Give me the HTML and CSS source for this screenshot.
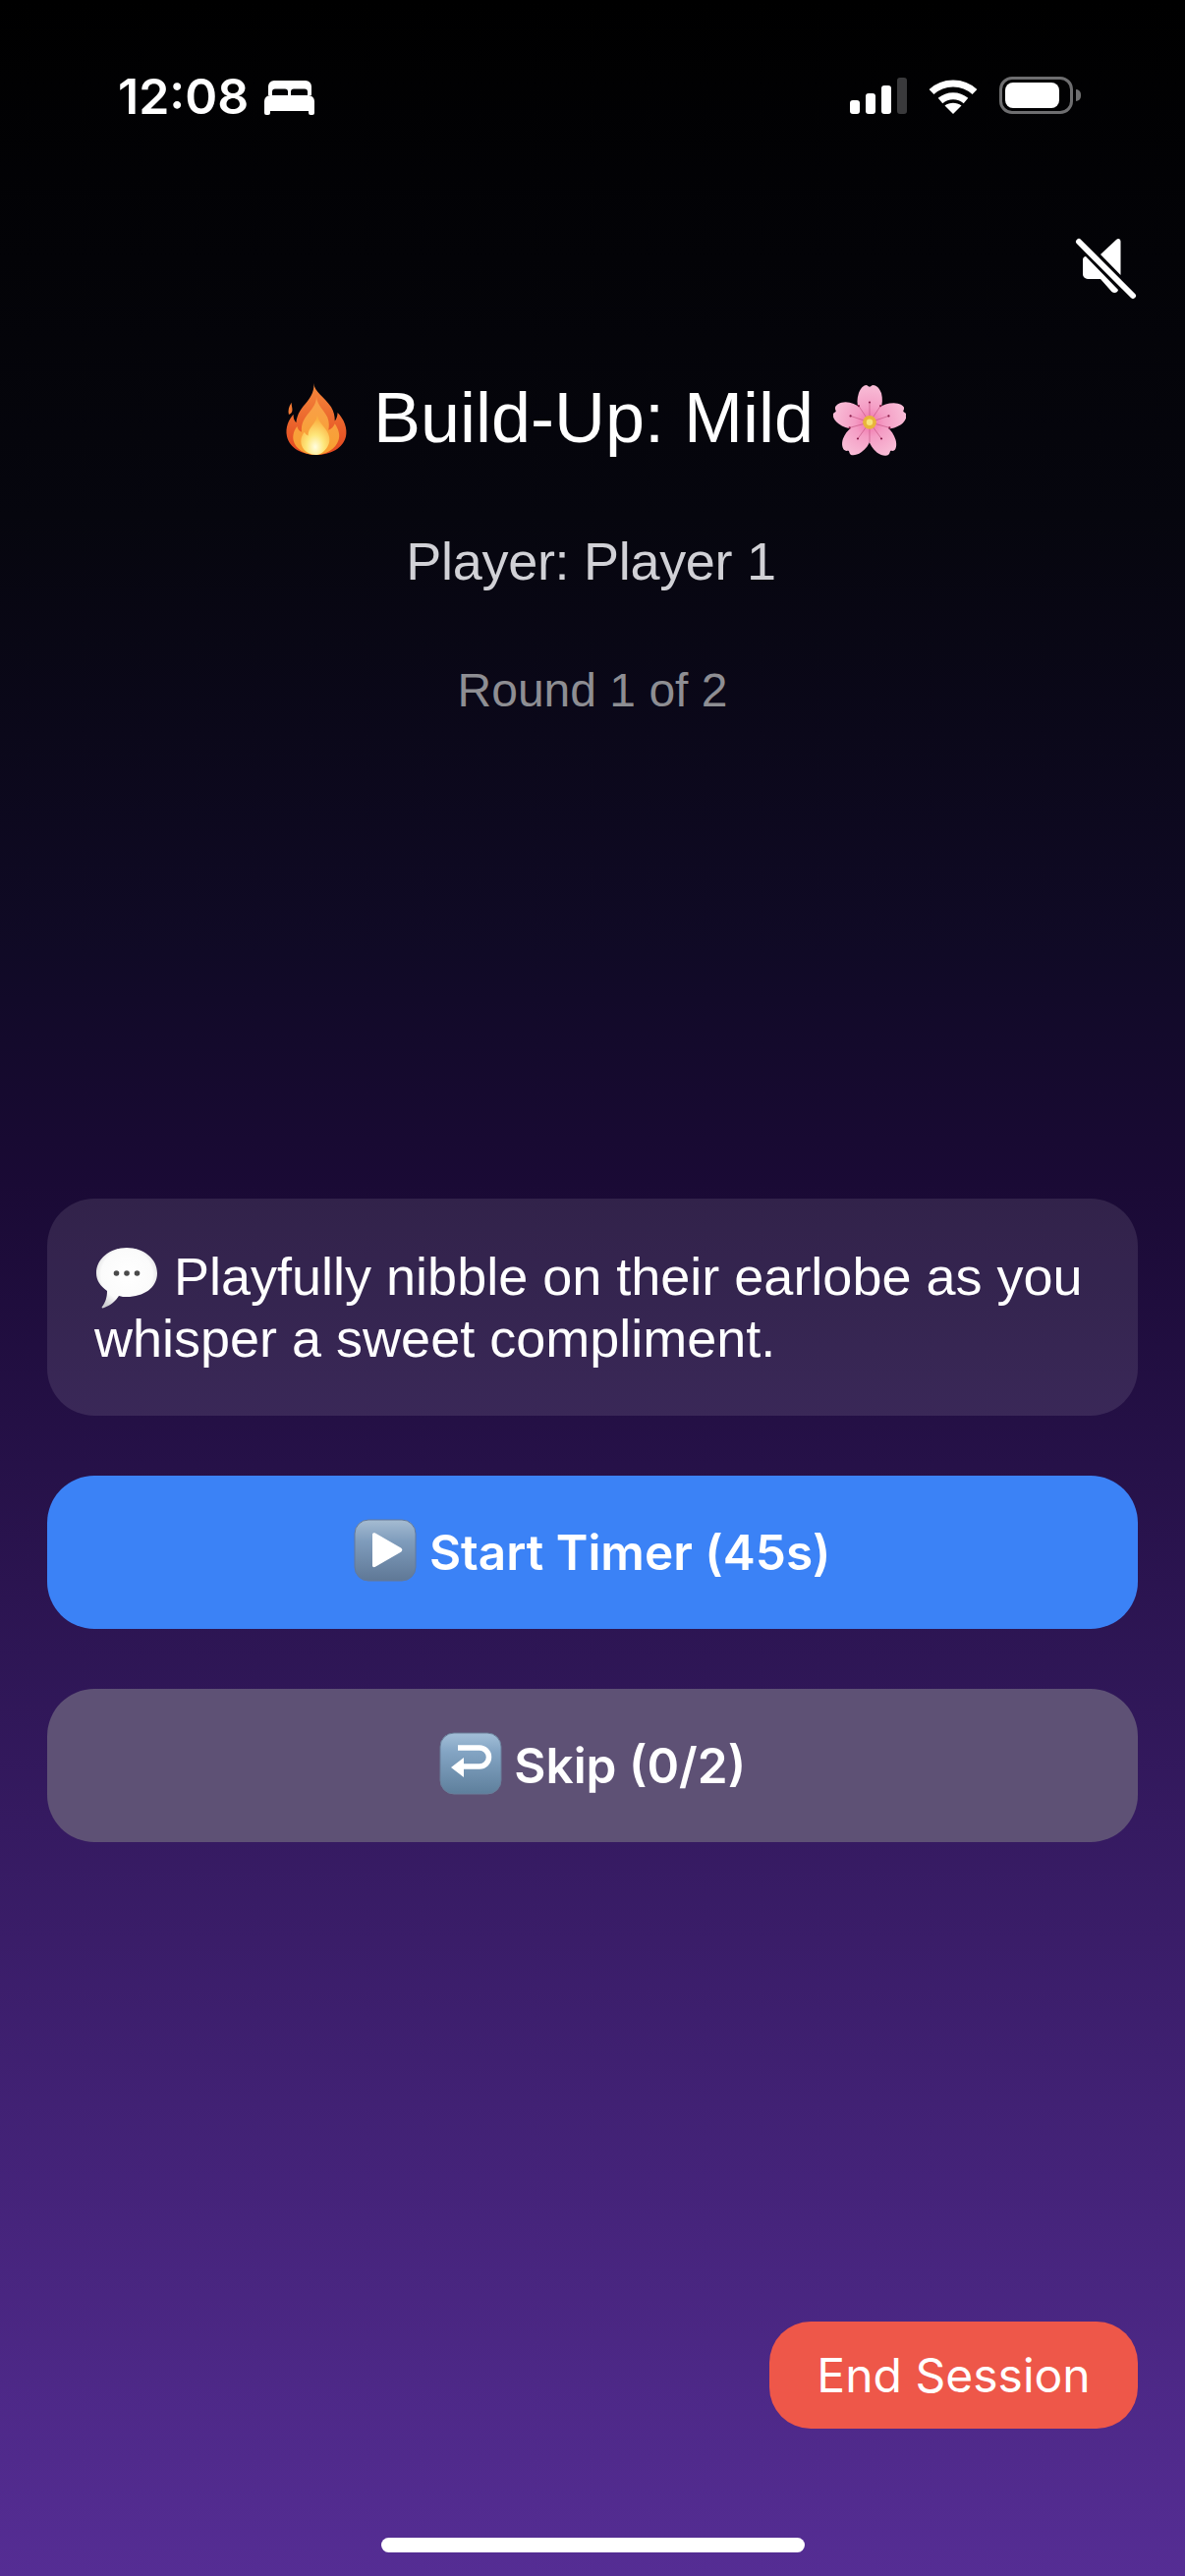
FILE: index.html
```html
<!DOCTYPE html>
<html lang="en">
<head>
  <meta charset="UTF-8">
  <meta name="viewport" content="width=device-width, initial-scale=1.0">
  <title>Build-Up: Mild</title>
  <link rel="stylesheet" href="styles.css">
</head>
<body>
  <div class="screen">
    <div class="status-bar">
      <div class="status-left">
        <span class="clock">12:08</span>
        <svg class="bed" viewBox="0 0 51 35">
          <path fill="#fff" fill-rule="evenodd" d="M10 0h32a6 6 0 0 1 6 6v9H44v-3.500a3 3 0 0 0-3-3H30a3 3 0 0 0-3 3V15H24v-3.500a3 3 0 0 0-3-3H11a3 3 0 0 0-3 3V15H4V6a6 6 0 0 1 6-6z"/>
          <path fill="#fff" d="M6 15h39a6 6 0 0 1 6 6v12a2 2 0 0 1-2 2h-2a2 2 0 0 1-2-2v-2H6v2a2 2 0 0 1-2 2H2a2 2 0 0 1-2-2V21a6 6 0 0 1 6-6z"/>
        </svg>
      </div>
      <div class="status-right">
        <div class="signal">
          <i class="bar bar-1"></i>
          <i class="bar bar-2"></i>
          <i class="bar bar-3"></i>
          <i class="bar bar-4"></i>
        </div>
        <svg class="wifi" viewBox="0 0 50 37">
          <path fill="none" stroke="#fff" stroke-width="7" d="M3 14.500C15 3 35 3 47 14.500"/>
          <path fill="none" stroke="#fff" stroke-width="7" d="M12 23.500c7.500-6.500 18.500-6.500 26 0"/>
          <path fill="#fff" d="M25 37l-8.500-8.500c5-3.700 12-3.700 17 0z"/>
        </svg>
        <div class="battery">
          <div class="battery-body"><div class="battery-level"></div></div>
          <div class="battery-tip"></div>
        </div>
      </div>
    </div>

    <div class="mute-row">
      <svg class="mute" viewBox="0 0 110 100">
        <path fill="#fff" d="M60 39l16-15c2-1.800 4.500-.8 4.500 2V60z"/>
        <path fill="#fff" d="M45 41l33 34c-.5 3-4 4-6.500 2L60 64H47a5 5 0 0 1-5-5V44c0-1.500 1.500-3 3-3z"/>
        <path fill="none" stroke="#fff" stroke-width="6" stroke-linecap="round" d="M38 26l55 55"/>
      </svg>
    </div>

    <div class="header">
      <h1 class="title">
        <svg class="emoji emoji-flame" viewBox="0 0 72 80">
          <defs>
            <linearGradient id="flameOuter" x1="0" y1="0" x2="0" y2="1">
              <stop offset="0" stop-color="#f58a3c"/>
              <stop offset="1" stop-color="#e2451f"/>
            </linearGradient>
            <linearGradient id="flameMid" x1="0" y1="0" x2="0" y2="1">
              <stop offset="0" stop-color="#f9a04a"/>
              <stop offset="1" stop-color="#f8a030"/>
            </linearGradient>
            <radialGradient id="flameCore" cx="0.5" cy="0.8" r="0.7">
              <stop offset="0" stop-color="#fffde0"/>
              <stop offset="0.45" stop-color="#fde67a"/>
              <stop offset="1" stop-color="#fbb040"/>
            </radialGradient>
          </defs>
          <path fill="url(#flameOuter)" d="M33 1c1 10 12 15 19 26 3 5 4 10 4 15 2-2 3-6 3-9 7 7 11 17 9 26-3 13-17 20-32 20S7 72 4 59c-2-10 2-18 7-24 0 4 1 7 3 9 1-10 6-16 12-23 5-6 8-13 7-20z"/>
          <path fill="#f27a34" d="M6 35c-1-4 0-9 3-13 0 5 2 8 0 11-1 1-2 2-3 2z"/>
          <path fill="url(#flameMid)" d="M36 16c1 9 8 14 12 22 2 5 2 10 1 14 3-1 6-4 7-7 4 6 6 12 4 18-3 10-14 16-25 16S13 73 11 63c-1-6 1-11 4-15 1 3 2 5 5 6-1-9 3-15 8-21 4-5 8-10 8-17z"/>
          <path fill="url(#flameCore)" d="M37 36c1 7 7 11 11 18 3 6 3 11 0 16-3 5-8 9-13 9s-11-3-14-8c-3-6-2-12 2-17 1 2 2 3 4 4 0-6 3-9 6-13 2-3 4-6 4-9z"/>
        </svg>
        Build-Up: Mild
        <svg class="emoji emoji-flower" viewBox="0 0 80 80">
          <defs>
            <radialGradient id="petal" gradientUnits="userSpaceOnUse" cx="40" cy="42" r="40">
              <stop offset="0" stop-color="#f06fa8"/>
              <stop offset="0.4" stop-color="#f49cc4"/>
              <stop offset="1" stop-color="#f8bcd6"/>
            </radialGradient>
          </defs>
          <g fill="url(#petal)">
            <path d="M40 40C28 34 24 22 28 10c2-6 6-9 8-9 2 0 3 2 4 2s2-2 4-2c3 0 7 3 9 9 3 12-1 24-13 30z"/>
            <path d="M40 40C28 34 24 22 28 10c2-6 6-9 8-9 2 0 3 2 4 2s2-2 4-2c3 0 7 3 9 9 3 12-1 24-13 30z" transform="rotate(72 40 42)"/>
            <path d="M40 40C28 34 24 22 28 10c2-6 6-9 8-9 2 0 3 2 4 2s2-2 4-2c3 0 7 3 9 9 3 12-1 24-13 30z" transform="rotate(144 40 42)"/>
            <path d="M40 40C28 34 24 22 28 10c2-6 6-9 8-9 2 0 3 2 4 2s2-2 4-2c3 0 7 3 9 9 3 12-1 24-13 30z" transform="rotate(216 40 42)"/>
            <path d="M40 40C28 34 24 22 28 10c2-6 6-9 8-9 2 0 3 2 4 2s2-2 4-2c3 0 7 3 9 9 3 12-1 24-13 30z" transform="rotate(288 40 42)"/>
          </g>
          <g stroke="#c2527f" stroke-width="0.7">
            <path d="M40 42V20M40 42L19 35M40 42L61 35M40 42L27 60M40 42L53 60"/>
            <path d="M40 42L28 24M40 42L52 24M40 42L18 48M40 42L62 48M40 42L40 64"/>
          </g>
          <g fill="#8a1c4a">
            <circle cx="40" cy="20" r="1.200"/><circle cx="19" cy="35" r="1.200"/><circle cx="61" cy="35" r="1.200"/>
            <circle cx="27" cy="60" r="1.200"/><circle cx="53" cy="60" r="1.200"/><circle cx="28" cy="24" r="1.200"/>
            <circle cx="52" cy="24" r="1.200"/><circle cx="18" cy="48" r="1.200"/><circle cx="62" cy="48" r="1.200"/>
          </g>
          <circle cx="40" cy="42" r="7.500" fill="#e8b53a"/>
          <circle cx="40" cy="42" r="3.500" fill="#f8e27a"/>
        </svg>
      </h1>
      <div class="player">Player: Player 1</div>
      <div class="round">Round 1 of 2</div>
    </div>

    <div class="actions">
      <div class="prompt-card">
        <svg class="emoji emoji-speech" viewBox="0 0 66 66">
          <defs>
            <radialGradient id="bubble" cx="0.5" cy="0.45" r="0.6">
              <stop offset="0" stop-color="#ffffff"/>
              <stop offset="0.7" stop-color="#fbfbfb"/>
              <stop offset="1" stop-color="#cfcfd2"/>
            </radialGradient>
          </defs>
          <path fill="url(#bubble)" d="M33 2c17 0 31 11 31 26S50 52 33 52c-3 0-5 0-8-1-3 5-9 10-15 12-2 1-3 0-2-1 3-4 5-9 5-16C6 41 2 35 2 28 2 13 16 2 33 2z"/>
          <circle cx="22.500" cy="28" r="2.800" fill="#4a4a4a"/>
          <circle cx="33" cy="28" r="2.800" fill="#4a4a4a"/>
          <circle cx="43.500" cy="28" r="2.800" fill="#4a4a4a"/>
        </svg>
        Playfully nibble on their earlobe as you whisper a sweet compliment.
      </div>

      <button class="action-btn btn-start">
        <svg class="emoji emoji-key" viewBox="0 0 64 64">
          <defs>
            <linearGradient id="keyPlay" x1="0" y1="0" x2="0" y2="1">
              <stop offset="0" stop-color="#a5bcd2"/>
              <stop offset="0.35" stop-color="#7f9cbc"/>
              <stop offset="1" stop-color="#5f7896"/>
            </linearGradient>
          </defs>
          <rect x="1" y="1" width="62" height="62" rx="14" fill="url(#keyPlay)" stroke="#64799a" stroke-width="1"/>
          <path fill="#fff" d="M19 16c0-1.500 1.500-2.200 3-1.400l26 15c1.800 1 1.800 3.200 0 4.200l-26 15c-1.500.8-3 .1-3-1.400z"/>
        </svg>
        Start Timer (45s)
      </button>

      <button class="action-btn btn-skip">
        <svg class="emoji emoji-key" viewBox="0 0 64 64">
          <defs>
            <linearGradient id="keySkip" x1="0" y1="0" x2="0" y2="1">
              <stop offset="0" stop-color="#a3bfd8"/>
              <stop offset="0.3" stop-color="#84a5c4"/>
              <stop offset="1" stop-color="#5e7f9c"/>
            </linearGradient>
          </defs>
          <rect x="1" y="1" width="62" height="62" rx="14" fill="url(#keySkip)" stroke="#6a7f9a" stroke-width="1"/>
          <path fill="none" stroke="#fff" stroke-width="5.500" d="M19 16h22a9.500 9.500 0 0 1 9.500 9.500v0A9.500 9.500 0 0 1 41 35H20"/>
          <path fill="#fff" d="M12 36l13-10v20z"/>
        </svg>
        Skip (0/2)
      </button>
    </div>

    <div class="footer">
      <button class="end-btn">End Session</button>
    </div>

    <div class="home-bar"></div>
  </div>
</body>
</html>
```

FILE: styles.css
```css
* {
  box-sizing: border-box;
}
body {
  margin: 0;
  background: #000;
  font-family: "Liberation Sans", Arial, sans-serif;
  color: #fff;
}
.screen {
  width: 1206px;
  height: 2622px;
  display: flex;
  flex-direction: column;
  overflow: hidden;
  background: linear-gradient(to bottom, #000 0%, #06060e 20%, #100a26 37%, #1a0a35 46%, #552d94 100%);
}

/* status bar */
.status-bar {
  height: 220px;
  padding: 72px 106px 0 120px;
  display: flex;
  justify-content: space-between;
  align-items: flex-start;
}
.status-left {
  display: flex;
  align-items: center;
  gap: 16px;
  height: 54px;
}
.clock {
  margin-top: -3px;
  font-family: Inter, "Liberation Sans", sans-serif;
  font-size: 50px;
  font-weight: 600;
  line-height: 54px;
}
.bed {
  width: 51px;
  height: 35px;
}
.status-right {
  display: flex;
  align-items: center;
  gap: 22px;
  height: 50px;
}
.signal {
  display: flex;
  align-items: flex-end;
  gap: 6px;
  height: 37px;
}
.bar {
  display: block;
  width: 10px;
  background: #fff;
  border-radius: 3px;
}
.bar-1 { height: 14px; }
.bar-2 { height: 21px; }
.bar-3 { height: 29px; }
.bar-4 { height: 37px; background: #3a3a3c; }
.wifi {
  width: 50px;
  height: 37px;
}
.battery {
  display: flex;
  align-items: center;
  gap: 3px;
}
.battery-body {
  width: 75px;
  height: 38px;
  padding: 3px;
  border: 3px solid #6e6e70;
  border-radius: 13px;
}
.battery-level {
  width: 55px;
  height: 100%;
  background: #fff;
  border-radius: 8px;
}
.battery-tip {
  width: 5px;
  height: 12px;
  background: #6e6e70;
  border-radius: 0 5px 5px 0;
}

.mute-row {
  display: flex;
  justify-content: flex-end;
  padding-right: 36px;
}
.mute {
  width: 110px;
  height: 100px;
}

/* header */
.header {
  margin-top: 60px;
  text-align: center;
}
.title {
  margin: 0;
  font-size: 72px;
  font-weight: 400;
  line-height: 90px;
}
.player {
  margin-top: 68px;
  padding-right: 3px;
  font-size: 54px;
  letter-spacing: -0.3px;
  line-height: 66px;
  color: #d1d1d6;
}
.round {
  margin-top: 69px;
  font-size: 48px;
  line-height: 60px;
  color: #8e8e93;
}

.emoji {
  display: inline-block;
  margin: -20px 0;
}
.emoji-flame {
  width: 68px;
  height: 75px;
  margin-left: 4px;
  margin-right: 4px;
  vertical-align: 6px;
}
.emoji-flower {
  width: 74px;
  height: 74px;
  vertical-align: 5px;
}
.emoji-speech {
  width: 66px;
  height: 66px;
  vertical-align: 4px;
}
.emoji-key {
  width: 64px;
  height: 64px;
  vertical-align: 8px;
}

/* prompt + buttons */
.actions {
  margin-top: 487px;
  padding: 0 48px;
  display: flex;
  flex-direction: column;
  gap: 61px;
}
.prompt-card {
  padding: 48px 48px 47px;
  background: rgba(255, 255, 255, 0.1);
  border-radius: 48px;
  font-size: 54px;
  line-height: 63px;
}
.action-btn {
  height: 156px;
  border: none;
  border-radius: 48px;
  color: #fff;
  font-family: Inter, "Liberation Sans", sans-serif;
  font-size: 49.5px;
  font-weight: 600;
  line-height: 60px;
}
.btn-start {
  background: #3b82f6;
}
.btn-skip {
  background: #5e5175;
}

/* bottom */
.footer {
  margin-top: auto;
  padding: 0 48px;
  display: flex;
  justify-content: flex-end;
}
.end-btn {
  width: 375px;
  height: 109px;
  border: none;
  border-radius: 42px;
  background: #ee5749;
  color: #fff;
  font-family: Inter, "Liberation Sans", sans-serif;
  font-size: 48px;
  font-weight: 400;
}
.home-bar {
  width: 431px;
  height: 15px;
  margin: 111px auto 24px;
  background: #fff;
  border-radius: 8px;
}
```
